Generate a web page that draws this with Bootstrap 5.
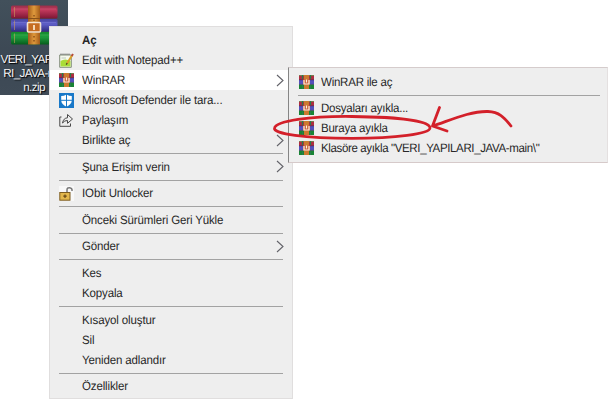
<!DOCTYPE html>
<html lang="tr">
<head>
<meta charset="utf-8">
<meta name="viewport" content="width=device-width, initial-scale=1">
<title>VERI_YAPILARI_JAVA-main.zip</title>
<link href="https://cdn.jsdelivr.net/npm/bootstrap@5.3.0/dist/css/bootstrap.min.css" rel="stylesheet">
<style>
body{width:615px;height:405px;overflow:hidden;background:#fff;font:12.1px/20px "Liberation Sans",Arial,sans-serif;letter-spacing:-.14px;text-rendering:geometricPrecision;color:#282828}
.desk-file{left:0;top:0;width:68px;height:95px;background:linear-gradient(#42505b,#3c4854 60%,#3f4b57)}
.file-label{font-size:11.7px;letter-spacing:-.62px;line-height:14px;color:#f4f4f4;text-shadow:1px 1px 1px #000;white-space:pre;padding-top:6px}
.menu-box{background:#eee;border:1px solid #e0dede}
.main-menu{left:49px;top:26px;width:244px;height:373px;padding-top:3px}
.sub-menu{left:288px;top:67px;width:320px;height:96px;padding-top:4px;border-color:#d5cccc #e4e0e0 #d6caca #858585;z-index:2;letter-spacing:-.24px}
.item{height:20px;padding-left:9px;padding-right:8px}
.item.active-item{background:#fff}
.pic{width:15px;height:15px;flex:none;margin-right:7.500px}
.pic svg,.chev{display:block}
.item-text{white-space:nowrap;transform:scaleX(.951);transform-origin:left}
.long-name{letter-spacing:-.38px}
.rule{height:6.6px;padding:3px 9px 0}
.rule div{height:1px;background:#a2a2a2}
.sub-menu .item{padding-left:9.500px}
.sub-menu .rule{height:6px;padding-right:7px}
.marks{left:0;top:0;z-index:3;pointer-events:none}
</style>
<script src="https://cdn.jsdelivr.net/npm/bootstrap@5.3.0/dist/js/bootstrap.bundle.min.js"></script>
</head>
<body class="position-relative">
<svg width="0" height="0" class="position-absolute" aria-hidden="true">
<defs>
<linearGradient id="r" x2="0" y2="1"><stop stop-color="#98304a"/><stop offset=".35" stop-color="#c2395c"/><stop offset="1" stop-color="#7c1634"/></linearGradient>
<linearGradient id="b" x2="0" y2="1"><stop stop-color="#4544a0"/><stop offset=".4" stop-color="#5f5fc8"/><stop offset="1" stop-color="#2f2b80"/></linearGradient>
<linearGradient id="g" x2="0" y2="1"><stop stop-color="#148a2c"/><stop offset=".4" stop-color="#1e9c3c"/><stop offset="1" stop-color="#075c1c"/></linearGradient>
<linearGradient id="s"><stop stop-color="#a45a18"/><stop offset=".5" stop-color="#e09a3c"/><stop offset="1" stop-color="#a45a18"/></linearGradient>
<symbol id="rar" viewBox="0 0 15 14">
<rect width="15" height="5" fill="#b02c40"/><rect y="5" width="15" height="4.5" fill="#5450bc"/><rect y="9.5" width="15" height="4.5" fill="#188434"/>
<path d="M0 .5H15" stroke="#7c7a4c"/><path d="M0 4.8H15M0 9.4H15" stroke="#383058" stroke-width=".6"/>
<rect x="5" width="5" height="14" fill="#cc7a30"/><rect x="4" y="4.5" width="7" height="5" fill="#c8603c"/>
<path d="M5 5V9H10V5M7.5 4.5V7.5" fill="none" stroke="#fff0e0" stroke-width="1.2"/>
<path d="M3.5 0V4M11.5 0V4M3.5 10.5V14M11.5 10.5V14" stroke="#287c4c" stroke-width="1.2"/>
</symbol>
</defs>
</svg>

<div class="desk-file position-absolute">
<svg class="d-block" width="68" height="47" viewBox="0 0 68 47">
<rect x="11" y="5.5" width="46.500" height="13" rx="1.500" fill="url(#r)"/>
<rect x="11" y="19" width="46.500" height="12.500" rx="1.500" fill="url(#b)"/>
<rect x="11" y="32" width="46.500" height="12.500" rx="1.500" fill="url(#g)"/>
<path d="M13 9H56" stroke="#d86080" opacity=".5"/><path d="M13 22.500H56" stroke="#8080dd" opacity=".5"/><path d="M13 35H56" stroke="#50bd66" opacity=".5"/>
<path d="M14.500 7V17M14.500 20.500V30M14.500 33.500V43" stroke="#d0a060" stroke-width=".8" opacity=".7"/>
<rect x="28" y="5.500" width="12" height="39" fill="url(#s)"/>
<path d="M28 18.500H40M28 32H40" stroke="#885018"/>
<rect x="27.500" y="22.500" width="13" height="9.500" rx="1" fill="#c66d22" stroke="#f3e4cf" stroke-width="1.600"/>
<path d="M34 25V30" stroke="#fff4dd" stroke-width="1.600"/>
<path d="M34 15v1.500M34 19.500v1.500M34 36v1.500M34 40v1.500" stroke="#7a4214" stroke-width="1.200"/>
</svg>
<div class="file-label text-center">VERI_YAPILA
RI_JAVA-mai
n.zip</div>
</div>

<div class="menu-box main-menu position-absolute">
<div class="item d-flex align-items-center"><span class="pic"></span><span class="item-text fw-bold">Aç</span></div>
<div class="item d-flex align-items-center"><span class="pic"><svg width="15" height="15" viewBox="0 0 15 15"><path d="M.7 2H12.300V14.300H.7Z" fill="#f5f8ee" stroke="#76836e" stroke-width=".9"/><path d="M1.500 8Q6 5 11.500 8V13.500H1.500Z" fill="#a9dc38"/><path d="M2 2V.5M4 2V.5M6 2V.5M8 2V.5M10 2V.5" stroke="#555" stroke-width=".8"/><path d="M2.500 5H7" stroke="#bccabc"/><path d="M8 10.500L13 2.500" stroke="#d9a12c" stroke-width="2"/><path d="M12.700 3L14 1" stroke="#b54b38" stroke-width="2"/><path d="M7.200 11.700L8.200 10.200" stroke="#494622" stroke-width="1.300"/></svg></span><span class="item-text">Edit with Notepad++</span></div>
<div class="item active-item d-flex align-items-center"><span class="pic"><svg width="15" height="14"><use href="#rar"/></svg></span><span class="item-text">WinRAR</span><svg class="chev ms-auto" width="8" height="13" viewBox="0 0 8 13"><path d="M1 1L7 6.500L1 12" fill="none" stroke="#626268" stroke-width="1.100"/></svg></div>
<div class="item d-flex align-items-center"><span class="pic"><svg width="15" height="15" viewBox="0 0 15 15"><rect width="15" height="15" fill="#1878c8"/><path d="M7.500 1.500Q10 3 12.800 3V7.500Q12.500 11.500 7.500 13.800Q2.500 11.500 2.200 7.500V3Q5 3 7.500 1.500Z" fill="#fff"/><path d="M7.500 1V14M2 7.300H13" stroke="#1878c8" stroke-width="1"/></svg></span><span class="item-text">Microsoft Defender ile tara...</span></div>
<div class="item d-flex align-items-center"><span class="pic"><svg width="15" height="15" viewBox="0 0 15 15" fill="none" stroke="#484848"><path d="M2.500 4H.8V13.300H11.500V10.500"/><path d="M3.500 10Q4.500 5 8.500 4.800V1.500L13.500 6L8.500 10.300V7.500Q5.500 7.300 3.500 10Z"/></svg></span><span class="item-text">Paylaşım</span></div>
<div class="item d-flex align-items-center"><span class="pic"></span><span class="item-text">Birlikte aç</span><svg class="chev ms-auto" width="8" height="13" viewBox="0 0 8 13"><path d="M1 1L7 6.500L1 12" fill="none" stroke="#626268" stroke-width="1.100"/></svg></div>
<div class="rule"><div></div></div>
<div class="item d-flex align-items-center"><span class="pic"></span><span class="item-text">Şuna Erişim verin</span><svg class="chev ms-auto" width="8" height="13" viewBox="0 0 8 13"><path d="M1 1L7 6.500L1 12" fill="none" stroke="#626268" stroke-width="1.100"/></svg></div>
<div class="rule"><div></div></div>
<div class="item d-flex align-items-center"><span class="pic"><svg width="15" height="15" viewBox="0 0 15 15"><rect width="15" height="15" fill="#f8f8f8"/><path d="M8 7V4Q8 1.500 10.500 1.700Q13.500 2 13 5" fill="none" stroke="#777" stroke-width="1.500"/><rect x=".8" y="6.500" width="10.200" height="7.700" fill="#e2b74c" stroke="#7c5c20"/><path d="M6 8.500V12M4.300 10.200H7.700" stroke="#664817" stroke-width="1.200"/></svg></span><span class="item-text">IObit Unlocker</span></div>
<div class="rule"><div></div></div>
<div class="item d-flex align-items-center"><span class="pic"></span><span class="item-text">Önceki Sürümleri Geri Yükle</span></div>
<div class="rule"><div></div></div>
<div class="item d-flex align-items-center"><span class="pic"></span><span class="item-text">Gönder</span><svg class="chev ms-auto" width="8" height="13" viewBox="0 0 8 13"><path d="M1 1L7 6.500L1 12" fill="none" stroke="#626268" stroke-width="1.100"/></svg></div>
<div class="rule"><div></div></div>
<div class="item d-flex align-items-center"><span class="pic"></span><span class="item-text">Kes</span></div>
<div class="item d-flex align-items-center"><span class="pic"></span><span class="item-text">Kopyala</span></div>
<div class="rule"><div></div></div>
<div class="item d-flex align-items-center"><span class="pic"></span><span class="item-text">Kısayol oluştur</span></div>
<div class="item d-flex align-items-center"><span class="pic"></span><span class="item-text">Sil</span></div>
<div class="item d-flex align-items-center"><span class="pic"></span><span class="item-text">Yeniden adlandır</span></div>
<div class="rule"><div></div></div>
<div class="item d-flex align-items-center"><span class="pic"></span><span class="item-text">Özellikler</span></div>
</div>

<div class="menu-box sub-menu position-absolute">
<div class="item d-flex align-items-center"><span class="pic"><svg width="15" height="14"><use href="#rar"/></svg></span><span class="item-text">WinRAR ile aç</span></div>
<div class="rule"><div></div></div>
<div class="item d-flex align-items-center"><span class="pic"><svg width="15" height="14"><use href="#rar"/></svg></span><span class="item-text">Dosyaları ayıkla...</span></div>
<div class="item d-flex align-items-center"><span class="pic"><svg width="15" height="14"><use href="#rar"/></svg></span><span class="item-text">Buraya ayıkla</span></div>
<div class="item d-flex align-items-center"><span class="pic"><svg width="15" height="14"><use href="#rar"/></svg></span><span class="item-text long-name">Klasöre ayıkla "VERI_YAPILARI_JAVA-main\"</span></div>
</div>

<svg class="marks position-absolute" width="615" height="405" fill="none" stroke="#d3202a" stroke-width="2.800" stroke-linecap="round" stroke-linejoin="round">
<path d="M274.500 128C276 121 310 116 352 116.500C400 117 430 121 430 128C430 134 395 138.200 352 138.300C305 138 273 134 274.500 128Z"/>
<path d="M439.500 107.500L432.500 126L447 131M433 126C451 120 470 111 488 111.500C499 112 504 117 511 126"/>
</svg>
</body>
</html>
